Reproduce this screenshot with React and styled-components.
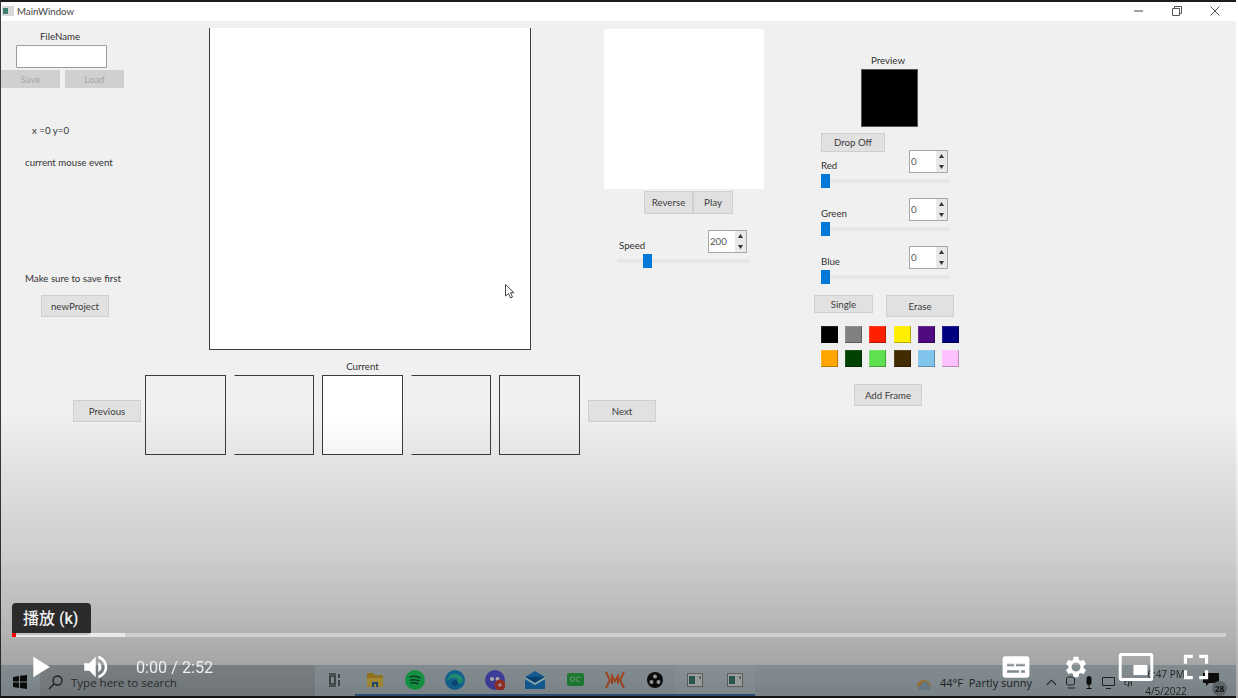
import React from "react";
import styled, { createGlobalStyle } from "styled-components";

const Global = createGlobalStyle`
  html, body { margin: 0; padding: 0; background: #fff; }
  * { box-sizing: border-box; }
`;

const Stage = styled.div`
  position: relative;
  width: 1238px;
  height: 698px;
  overflow: hidden;
  background: #fff;
`;
const Screen = styled.div`
  width: 1236px;
  height: 698px;
  display: flex;
  flex-direction: column;
  background: #f0f0f0;
  border-top: 2px solid #1c1c1c;
  border-left: 1px solid #3a3a3a;
  border-bottom: 2px solid #202020;
  font-family: Lato, "Open Sans", sans-serif;
  font-size: 9.7px;
  color: #333;
  filter: blur(0.5px);
`;
const TitleBar = styled.div`
  height: 19px;
  flex: none;
  display: flex;
  align-items: center;
  background: #fff;
  padding-left: 1px;
  padding-bottom: 1px;
  font-size: 9.7px;
  color: #444;
`;
const TitleText = styled.span`
  margin-left: 3px;
`;
const WindowButtons = styled.div`
  margin-left: auto;
  display: flex;
  align-items: center;
  gap: 28px;
  padding-right: 16px;
  color: #555;
`;
const Workspace = styled.div`
  display: flex;
  align-items: flex-start;
`;
const MainArea = styled.div`
  width: 813px;
  flex: none;
`;
const TopRow = styled.div`
  height: 329px;
  display: flex;
  align-items: flex-start;
`;
const LeftColumn = styled.div`
  width: 208px;
  flex: none;
  display: flex;
  flex-direction: column;
  align-items: flex-start;
`;
const Label = styled.div`
  line-height: 10px;
  height: 12px;
  white-space: nowrap;
  margin-top: ${(p) => p.$top || 0}px;
  margin-left: ${(p) => p.$left || 0}px;
  width: ${(p) => (p.$width ? `${p.$width}px` : "auto")};
  text-align: ${(p) => (p.$center ? "center" : "left")};
`;
const TextInput = styled.div`
  width: 91px;
  height: 23px;
  margin: 2px 0 0 15px;
  background: #fff;
  border: 1px solid #9b9b9b;
  border-radius: 1px;
`;
const ButtonRow = styled.div`
  display: flex;
  gap: ${(p) => p.$gap || 0}px;
  align-items: flex-start;
  margin-top: ${(p) => p.$top || 0}px;
  margin-left: ${(p) => p.$left || 0}px;
`;
const Button = styled.div`
  width: ${(p) => p.$w}px;
  height: ${(p) => p.$h || 22}px;
  margin-top: ${(p) => p.$top || 0}px;
  margin-left: ${(p) => p.$left || 0}px;
  padding-bottom: 1px;
  display: flex;
  align-items: center;
  justify-content: center;
  flex: none;
  font-size: 9.7px;
  color: ${(p) => (p.$disabled ? "#a6a6a6" : "#3c3c3c")};
  background: ${(p) => (p.$disabled ? "#d0d0d0" : "#e1e1e1")};
  border: 1px solid ${(p) => (p.$disabled ? "#d0d0d0" : "#cfcfcf")};
`;
const Canvas = styled.div`
  width: 322px;
  height: 322px;
  flex: none;
  margin-top: 7px;
  background: #fff;
  border: 1px solid #3c3c3c;
  border-top: none;
`;
const PreviewColumn = styled.div`
  width: 160px;
  flex: none;
  margin: 8px 0 0 73px;
`;
const AnimationBox = styled.div`
  width: 160px;
  height: 160px;
  background: #fff;
`;
const SliderBlock = styled.div`
  width: ${(p) => p.$w}px;
  margin-top: ${(p) => p.$top || 0}px;
  margin-left: ${(p) => p.$left || 0}px;
`;
const SliderHead = styled.div`
  height: 23px;
  display: flex;
  justify-content: space-between;
  padding-right: ${(p) => p.$right || 0}px;
  padding-left: ${(p) => p.$pad || 0}px;
`;
const SliderLabel = styled.div`
  line-height: 10px;
  margin-top: 10px;
`;
const Spin = styled.div`
  width: 39px;
  height: 23px;
  display: flex;
  background: #fff;
  border: 1px solid #a8a8a8;
`;
const SpinValue = styled.div`
  flex: 1;
  padding-left: 1px;
  line-height: 21px;
  font-size: 9.7px;
  color: #555;
`;
const SpinArrows = styled.div`
  width: 11px;
  display: flex;
  flex-direction: column;
  background: #e8e8e8;
`;
const SpinArrow = styled.div`
  flex: 1;
  display: flex;
  align-items: center;
  justify-content: center;
`;
const Track = styled.div`
  height: 14px;
  margin-top: 1px;
  display: flex;
  align-items: center;
  background: linear-gradient(#0000 5px, #e6e6e6 5px, #e6e6e6 9px, #0000 9px);
`;
const Thumb = styled.div`
  width: 9px;
  height: 14px;
  margin-left: ${(p) => p.$offset || 0}px;
  background: #0078d7;
`;
const FramesRow = styled.div`
  display: flex;
  align-items: flex-start;
  padding-left: 72px;
  margin-top: 11px;
`;
const FrameStrip = styled.div`
  width: 435px;
  margin: 0 8px 0 4px;
`;
const Frames = styled.div`
  display: flex;
  gap: 8px;
  margin-top: 2px;
`;
const Frame = styled.div`
  flex: 1;
  height: 80px;
  background: ${(p) => (p.$current ? "#fff" : "transparent")};
  border: 1px solid #3c3c3c;
  border-left-color: ${(p) => (p.$open ? "transparent" : "#3c3c3c")};
`;
const ColorColumn = styled.div`
  width: 150px;
  flex: none;
`;
const Swatch = styled.div`
  height: 17px;
  background: ${(p) => p.$color};
  box-shadow: inset -1px -1px 0 rgba(0, 0, 0, 0.28), inset 1px 1px 0 rgba(255, 255, 255, 0.12);
`;
const Swatches = styled.div`
  display: grid;
  grid-template-columns: repeat(6, 17px);
  column-gap: 7.2px;
  row-gap: 7px;
  margin: 9px 0 0 7px;
`;
const BlackPreview = styled.div`
  width: 57px;
  height: 58px;
  margin: 2px 0 0 47px;
  background: #000;
  border: 1px solid #555;
`;
const Taskbar = styled.div`
  margin-top: auto;
  height: 31px;
  flex: none;
  display: flex;
  align-items: stretch;
  background: #bccbd2;
  color: #2e2e2e;
`;
const StartSlot = styled.div`
  width: 39px;
  flex: none;
  display: flex;
  align-items: center;
  padding-left: 12px;
  padding-top: 2px;
`;
const SearchBox = styled.div`
  width: 275px;
  flex: none;
  display: flex;
  align-items: center;
  gap: 8px;
  padding: 3px 0 0 8px;
  background: #aeb7bb;
  font-family: "Open Sans", sans-serif;
  font-size: 11.5px;
  color: #3a3f41;
`;
const TaskSlot = styled.div`
  width: 40px;
  flex: none;
  display: flex;
  align-items: center;
  justify-content: center;
  background: ${(p) => (p.$active ? "#c3d2d8" : "transparent")};
  border-bottom: 2px solid ${(p) => (p.$running ? "#3f78b0" : "transparent")};
  background-clip: padding-box;
`;
const Tray = styled.div`
  margin-left: auto;
  display: flex;
  align-items: center;
  font-family: "Open Sans", sans-serif;
  font-size: 11px;
  color: #333;
  padding: 4px 3px 0 0;
`;
const TrayText = styled.span`
  white-space: nowrap;
  margin: 0 14px 0 8px;
`;
const TrayIcons = styled.div`
  display: flex;
  align-items: center;
  gap: 9px;
`;
const Clock = styled.div`
  width: 62px;
  margin-left: 2px;
  text-align: center;
  font-size: 10px;
  line-height: 17px;
`;
const NotifySlot = styled.div`
  position: relative;
  width: 30px;
  height: 20px;
  margin-left: 6px;
`;
const NotifyBadge = styled.div`
  position: absolute;
  right: 6px;
  bottom: -3px;
  width: 15px;
  height: 15px;
  border-radius: 50%;
  background: #8d9a9f;
  color: #222;
  font-size: 8.5px;
  line-height: 15px;
  text-align: center;
  font-weight: 700;
`;
const Cursor = styled.svg`
  position: absolute;
  left: 505px;
  top: 284px;
  width: 10px;
  height: 15px;
`;
const Dim = styled.div`
  position: absolute;
  inset: 0;
  pointer-events: none;
  background: linear-gradient(
    rgba(0, 0, 0, 0) 0,
    rgba(0, 0, 0, 0) 415px,
    rgba(0, 0, 0, 0.07) 480px,
    rgba(0, 0, 0, 0.15) 560px,
    rgba(0, 0, 0, 0.23) 620px,
    rgba(0, 0, 0, 0.3) 660px,
    rgba(0, 0, 0, 0.36) 698px
  );
`;
const Tooltip = styled.div`
  position: absolute;
  left: 12px;
  top: 603px;
  width: 79px;
  height: 32px;
  border-radius: 4px;
  background: #2b2b2b;
  color: #f0f0f0;
  font-family: Roboto, "Noto Sans CJK SC", sans-serif;
  font-size: 16px;
  font-weight: 500;
  line-height: 31px;
  padding-left: 11px;
  white-space: nowrap;
`;
const Progress = styled.div`
  position: absolute;
  left: 12px;
  top: 633px;
  width: 1214px;
  height: 4px;
  display: flex;
  background: rgba(255, 255, 255, 0.38);
`;
const Played = styled.div`
  width: 4px;
  background: #f00;
`;
const Buffered = styled.div`
  width: 109px;
  background: rgba(255, 255, 255, 0.55);
`;
const Controls = styled.div`
  position: absolute;
  left: 0;
  right: 0;
  top: 644px;
  height: 46px;
  display: flex;
  align-items: center;
  color: #fff;
`;
const ControlIcon = styled.svg`
  flex: none;
  display: block;
  width: ${(p) => p.$w || 46}px;
  height: 46px;
  margin-left: ${(p) => p.$left || 0}px;
  fill: #fff;
`;
const TimeText = styled.div`
  margin-left: 16px;
  font-family: Roboto, sans-serif;
  font-size: 16.2px;
  color: #eee;
  white-space: nowrap;
  padding-top: 1px;
`;
const ControlsRight = styled.div`
  margin-left: auto;
  display: flex;
  align-items: center;
  padding-right: 19.5px;
`;

const ArrowUp = () => (
  <svg width="5" height="4" viewBox="0 0 5 4"><path d="M2.5 0 5 4H0z" fill="#333" /></svg>
);
const ArrowDown = () => (
  <svg width="5" height="4" viewBox="0 0 5 4"><path d="M0 0h5L2.5 4z" fill="#333" /></svg>
);

const SpinBox = ({ value }) => (
  <Spin>
    <SpinValue>{value}</SpinValue>
    <SpinArrows>
      <SpinArrow><ArrowUp /></SpinArrow>
      <SpinArrow><ArrowDown /></SpinArrow>
    </SpinArrows>
  </Spin>
);

const ColorSlider = ({ name, top }) => (
  <SliderBlock $w={129} $top={top} $left={7}>
    <SliderHead $right={2}>
      <SliderLabel>{name}</SliderLabel>
      <SpinBox value="0" />
    </SliderHead>
    <Track><Thumb /></Track>
  </SliderBlock>
);

const swatches = ["#000000", "#808080", "#ff2000", "#ffee00", "#500a80", "#000080", "#ffa500", "#004000", "#5fe050", "#402c00", "#80c4ec", "#ffc0ff"];

const AppIcon = () => (
  <svg width="16" height="14" viewBox="0 0 16 14">
    <rect x="0.5" y="0.5" width="15" height="13" fill="#e8e8e8" stroke="#8a8a8a" />
    <rect x="2" y="3" width="6" height="8" fill="#3f7f70" />
    <rect x="12.5" y="3" width="1" height="3" fill="#444" />
  </svg>
);

export default function App() {
  return (
    <Stage>
      <Global />
      <Screen>
        <TitleBar>
          <svg width="12" height="10" viewBox="0 0 12 10">
            <rect width="12" height="10" fill="#d8d8d8" />
            <rect x="1" y="2" width="5" height="6" fill="#3f7f70" />
          </svg>
          <TitleText>MainWindow</TitleText>
          <WindowButtons>
            <svg width="10" height="10" viewBox="0 0 10 10"><path d="M0 5h9" stroke="#666" strokeWidth="1.2" /></svg>
            <svg width="10" height="10" viewBox="0 0 10 10" fill="none" stroke="#555"><path d="M.5 2.5h7v7h-7zM2.5 2.5v-2h7v7h-2" /></svg>
            <svg width="10" height="10" viewBox="0 0 10 10"><path d="M.5.5l9 9M9.500.5l-9 9" stroke="#555" /></svg>
          </WindowButtons>
        </TitleBar>
        <Workspace>
          <MainArea>
            <TopRow>
              <LeftColumn>
                <Label $top={10} $width={118} $center>FileName</Label>
                <TextInput />
                <ButtonRow $top={2} $gap={5}>
                  <Button $w={59} $h={18} $disabled>Save</Button>
                  <Button $w={59} $h={18} $disabled>Load</Button>
                </ButtonRow>
                <Label $top={37} $left={31}>x =0 y=0</Label>
                <Label $top={20} $left={24}>current mouse event</Label>
                <Label $top={104} $left={24}>Make sure to save first</Label>
                <Button $w={68} $top={10} $left={40}>newProject</Button>
              </LeftColumn>
              <Canvas />
              <PreviewColumn>
                <AnimationBox />
                <ButtonRow $top={2} $left={40}>
                  <Button $w={49} $h={23}>Reverse</Button>
                  <Button $w={40} $h={23}>Play</Button>
                </ButtonRow>
                <SliderBlock $w={133} $top={16} $left={13}>
                  <SliderHead $pad={2} $right={3}>
                    <SliderLabel>Speed</SliderLabel>
                    <SpinBox value="200" />
                  </SliderHead>
                  <Track><Thumb $offset={26} /></Track>
                </SliderBlock>
              </PreviewColumn>
            </TopRow>
            <FramesRow>
              <Button $w={68} $top={39}>Previous</Button>
              <FrameStrip>
                <Label $center>Current</Label>
                <Frames>
                  <Frame />
                  <Frame $open />
                  <Frame $current />
                  <Frame $open />
                  <Frame />
                </Frames>
              </FrameStrip>
              <Button $w={68} $top={39}>Next</Button>
            </FramesRow>
          </MainArea>
          <ColorColumn>
            <Label $top={34} $width={148} $center>Preview</Label>
            <BlackPreview />
            <Button $w={64} $h={19} $top={6} $left={7}>Drop Off</Button>
            <ColorSlider name="Red" top={-2} />
            <ColorSlider name="Green" top={10} />
            <ColorSlider name="Blue" top={10} />
            <ButtonRow $top={11} $gap={13}>
              <Button $w={59} $h={18}>Single</Button>
              <Button $w={68}>Erase</Button>
            </ButtonRow>
            <Swatches>
              {swatches.map((c) => <Swatch key={c} $color={c} />)}
            </Swatches>
            <Button $w={68} $top={17} $left={40}>Add Frame</Button>
          </ColorColumn>
        </Workspace>
        <Taskbar>
          <StartSlot>
            <svg width="14" height="14" viewBox="0 0 14 14" fill="#111">
              <path d="M0 2l6-1v5.500H0zM7 .8 14 0v6.500H7zM0 7.500h6V13l-6-1zM7 7.500h7V14l-7-1z" />
            </svg>
          </StartSlot>
          <SearchBox>
            <svg width="15" height="15" viewBox="0 0 15 15" fill="none" stroke="#2a2a2a" strokeWidth="1.3">
              <circle cx="9.500" cy="5.500" r="4.500" /><path d="M6 9l-5 5" />
            </svg>
            <span>Type here to search</span>
          </SearchBox>
          <TaskSlot>
            <svg width="14" height="14" viewBox="0 0 14 14" fill="none" stroke="#222" strokeWidth="1.2">
              <path d="M1 1h7M1 13h7M2 3h5v8H2zM11 1v4M11 7v6" />
            </svg>
          </TaskSlot>
          <TaskSlot $running>
            <svg width="18" height="16" viewBox="0 0 18 16">
              <path d="M1 1h6l2 2h8v3H1z" fill="#d7a92e" />
              <path d="M1 6h16v9H1z" fill="#f0c948" />
              <path d="M6 15v-5h6v5h-2v-3H8v3z" fill="#2b6fb0" />
            </svg>
          </TaskSlot>
          <TaskSlot $running>
            <svg width="20" height="20" viewBox="0 0 20 20">
              <circle cx="10" cy="10" r="10" fill="#1ed760" />
              <path d="M4.500 7c4-1.200 8-.8 11 1M5 10.300c3.500-1 7-.6 9.600.9M5.600 13.300c3-.8 5.800-.4 8 .8" stroke="#153" strokeWidth="1.500" fill="none" />
            </svg>
          </TaskSlot>
          <TaskSlot $running>
            <svg width="20" height="20" viewBox="0 0 20 20">
              <circle cx="10" cy="10" r="10" fill="#1b8fd0" />
              <path d="M2 11c1-6 7-9 12-6 3 1.500 4 4 4 6 0 2-3 2.500-6 2-2 0-1-3 1-3-1-3-8-3-11 1z" fill="#2fd0a0" />
              <circle cx="10" cy="13" r="3" fill="#1565a8" />
            </svg>
          </TaskSlot>
          <TaskSlot $running>
            <svg width="20" height="20" viewBox="0 0 20 20">
              <circle cx="10" cy="10" r="10" fill="#5a5ae0" />
              <circle cx="7" cy="9" r="2" fill="#fff" />
              <circle cx="12.500" cy="9" r="2" fill="#fff" />
              <circle cx="15" cy="15" r="5.500" fill="#d8443a" />
              <path d="M13 15h4M15 13v4" stroke="#fff" />
            </svg>
          </TaskSlot>
          <TaskSlot $running>
            <svg width="20" height="18" viewBox="0 0 20 18">
              <path d="M10 0l10 6v12H0V6z" fill="#1a86d8" />
              <path d="M0 6h20l-10 6z" fill="#0d5ea8" />
              <path d="M0 6l10 6 10-6v2l-10 6L0 8z" fill="#dff" />
            </svg>
          </TaskSlot>
          <TaskSlot $running>
            <svg width="17" height="13" viewBox="0 0 17 13">
              <rect width="17" height="13" rx="2" fill="#2db34a" />
              <circle cx="5.500" cy="6" r="2.200" fill="none" stroke="#9fe8a8" />
              <path d="M13 4.500a2.300 2.300 0 1 0 0 3.500" fill="none" stroke="#9fe8a8" />
            </svg>
          </TaskSlot>
          <TaskSlot $running>
            <svg width="20" height="18" viewBox="0 0 20 18" fill="none" stroke="#e8672a" strokeWidth="2">
              <path d="M1 1l4 8-4 8M19 1l-4 8 4 8M7 13V5l3 5 3-5v8" />
            </svg>
          </TaskSlot>
          <TaskSlot $running>
            <svg width="16" height="16" viewBox="0 0 16 16">
              <circle cx="8" cy="8" r="8" fill="#111" />
              <circle cx="8" cy="4.500" r="2" fill="#ddd" />
              <circle cx="4.500" cy="10" r="2" fill="#ddd" />
              <circle cx="11.500" cy="10" r="2" fill="#ddd" />
            </svg>
          </TaskSlot>
          <TaskSlot $running $active><AppIcon /></TaskSlot>
          <TaskSlot $running $active><AppIcon /></TaskSlot>
          <Tray>
            <svg width="16" height="14" viewBox="0 0 16 14">
              <path d="M1 11a7 7 0 0 1 14 0z" fill="#e9a63a" />
              <path d="M3 14a3 3 0 0 1 2-5 4 4 0 0 1 8 1 2 2 0 0 1 0 4z" fill="#9bb6c8" />
            </svg>
            <TrayText>44°F&nbsp; Partly sunny</TrayText>
            <TrayIcons>
              <svg width="11" height="7" viewBox="0 0 12 7" fill="none" stroke="#2a2a2a" strokeWidth="1.2"><path d="M1 6l5-5 5 5" /></svg>
              <svg width="10" height="13" viewBox="0 0 10 13" fill="none" stroke="#333"><rect x=".5" y="1" width="8" height="8" rx="2" /><path d="M2 12h7" /></svg>
              <svg width="8" height="13" viewBox="0 0 7 13" fill="#111"><rect x="1" width="5" height="9" rx="2.500" /><path d="M3 9h1v3H3zM1 12h5v1H1z" /></svg>
              <svg width="13" height="12" viewBox="0 0 13 12" fill="none" stroke="#333"><path d="M.5.500h12v8H.5zM4 11.500h5" /></svg>
              <svg width="9" height="12" viewBox="0 0 12 12" fill="none" stroke="#333"><path d="M1 4h2l3-3v10L3 8H1zM8 4v4M10 2v8" /></svg>
            </TrayIcons>
            <Clock>
              <div>6:47 PM</div>
              <div>4/5/2022</div>
            </Clock>
            <NotifySlot>
              <svg width="16" height="13" viewBox="0 0 16 13"><path d="M0 0h16v10H6l-3 3v-3H0z" fill="#111" /></svg>
              <NotifyBadge>28</NotifyBadge>
            </NotifySlot>
          </Tray>
        </Taskbar>
      </Screen>
      <Cursor viewBox="0 0 10 15">
        <path d="M.5.500V12l3-2.500 2 4.500 2-1-2-4.300H9z" fill="#fff" stroke="#333" strokeWidth="0.9" />
      </Cursor>
      <Dim />
      <Tooltip>播放 (k)</Tooltip>
      <Progress>
        <Played />
        <Buffered />
      </Progress>
      <Controls>
        <ControlIcon viewBox="0 0 36 36" $left={18}>
          <path d="M12 26 18.500 22 18.500 14 12 10zM18.500 22 25 18 25 18 18.500 14z" />
        </ControlIcon>
        <ControlIcon viewBox="0 0 36 36" $left={10}>
          <path d="M8,21 L12,21 L17,26 L17,10 L12,15 L8,15 L8,21 Z M19,14 L19,22 C20.48,21.32 21.5,19.77 21.5,18 C21.5,16.26 20.48,14.74 19,14 Z M19,11.29 C21.89,12.15 24,14.83 24,18 C24,21.17 21.89,23.85 19,24.71 L19,26.77 C23.01,25.86 26,22.28 26,18 C26,13.72 23.01,10.14 19,9.23 L19,11.29 Z" />
        </ControlIcon>
        <TimeText>0:00 / 2:52</TimeText>
        <ControlsRight>
          <ControlIcon viewBox="0 0 36 36">
            <path fillRule="evenodd" d="M9.500 9.500C8.400 9.500 7.500 10.400 7.500 11.500V24.500C7.500 25.600 8.400 26.500 9.500 26.500H26.500C27.600 26.500 28.500 25.600 28.500 24.500V11.500C28.500 10.400 27.600 9.500 26.500 9.500ZM11 15.500H16.500V17.500H11ZM18 15.500H25V17.500H18ZM11 20.500H20.500V22.500H11ZM22 20.500H25V22.500H22Z" />
          </ControlIcon>
          <ControlIcon viewBox="0 0 36 36" $left={14}>
            <path fillRule="evenodd" d="m 23.94,18.78 c .03,-0.25 .05,-0.51 .05,-0.78 0,-0.27 -0.02,-0.52 -0.05,-0.78 l 1.68,-1.32 c .15,-0.12 .19,-0.33 .09,-0.51 l -1.6,-2.76 c -0.09,-0.17 -0.31,-0.24 -0.48,-0.17 l -1.99,.8 c -0.41,-0.32 -0.86,-0.58 -1.35,-0.78 l -0.30,-2.12 c -0.02,-0.19 -0.19,-0.33 -0.39,-0.33 l -3.2,0 c -0.2,0 -0.36,.14 -0.39,.33 l -0.30,2.12 c -0.48,.2 -0.93,.47 -1.35,.78 l -1.99,-0.8 c -0.18,-0.07 -0.39,0 -0.48,.17 l -1.6,2.76 c -0.10,.17 -0.05,.39 .09,.51 l 1.68,1.32 c -0.03,.25 -0.05,.52 -0.05,.78 0,.26 .02,.52 .05,.78 l -1.68,1.32 c -0.15,.12 -0.19,.33 -0.09,.51 l 1.6,2.76 c .09,.17 .31,.24 .48,.17 l 1.99,-0.8 c .41,.32 .86,.58 1.35,.78 l .30,2.12 c .02,.19 .19,.33 .39,.33 l 3.2,0 c .2,0 .36,-0.14 .39,-0.33 l .30,-2.12 c .48,-0.2 .93,-0.47 1.35,-0.78 l 1.99,.8 c .18,.07 .39,0 .48,-0.17 l 1.6,-2.76 c .09,-0.17 .05,-0.39 -0.09,-0.51 l -1.68,-1.32 Z M 18,21.5 a 3.5,3.5 0 1 1 0,-7 3.5,3.5 0 1 1 0,7 Z" />
          </ControlIcon>
          <ControlIcon viewBox="0 0 36 36" $left={14}>
            <path fillRule="evenodd" d="M4.500 9C4.500 7.900 5.400 7 6.500 7H29.500C30.600 7 31.500 7.900 31.500 9V27C31.500 28.100 30.600 29 29.500 29H6.500C5.400 29 4.500 28.100 4.500 27ZM6.800 9.300V26.700H29.200V9.300Z" />
            <path d="M16 16.400H27V24.300H16Z" />
          </ControlIcon>
          <ControlIcon viewBox="0 0 36 36" $left={14}>
            <path d="M8.500 8.500H15.500V11H11V15.500H8.500ZM20.500 8.500H27.500V15.500H25V11H20.500ZM8.500 20.500H11V25H15.500V27.500H8.500ZM25 20.500H27.500V27.500H20.500V25H25Z" />
          </ControlIcon>
        </ControlsRight>
      </Controls>
    </Stage>
  );
}
